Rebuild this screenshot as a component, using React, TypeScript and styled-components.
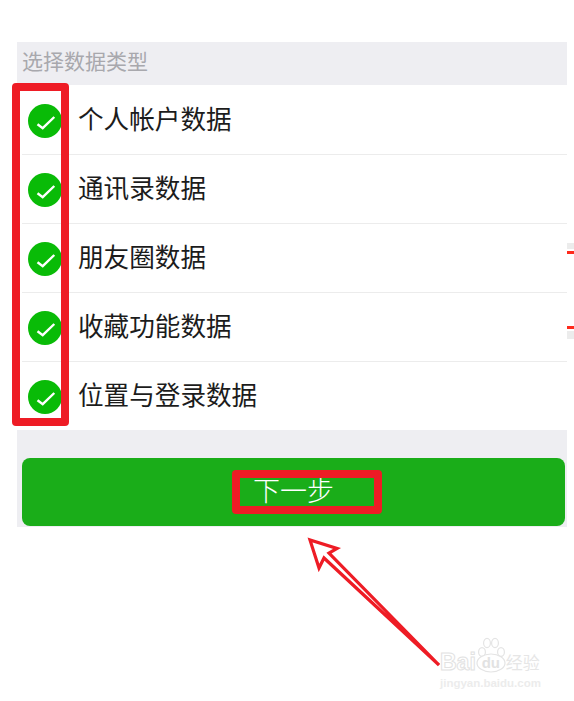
import React from 'react';
import styled, { createGlobalStyle } from 'styled-components';

const items = ['个人帐户数据', '通讯录数据', '朋友圈数据', '收藏功能数据', '位置与登录数据'];

const App: React.FC = () => {
  return (
    <>
      <GlobalStyle />
      <Page>
        <Panel>
          <SectionTitle>选择数据类型</SectionTitle>
          <List>
            {items.map((item) => (
              <Row key={item}>
                <CheckIcon />
                <RowLabel>{item}</RowLabel>
              </Row>
            ))}
          </List>
          <Footer>
            <NextButton>下一步</NextButton>
          </Footer>
        </Panel>

        <ColumnMark />
        <ButtonMark />
        <Arrow />
        <ScrapStrip>
          <Scrap $height={6} $color="#ececec" />
          <Scrap $height={3} $color="#ff2a1c" />
          <Scrap $height={68} $color="#fff" />
          <Scrap $height={3} $color="#ff2a1c" />
          <Scrap $height={8} $color="#ececec" />
        </ScrapStrip>

        <Watermark>
          <MarkName>
            <MarkLatin>Bai</MarkLatin>
            <MarkPaw>
              <PawIcon />
              <MarkDu>du</MarkDu>
            </MarkPaw>
            <MarkCn>经验</MarkCn>
          </MarkName>
          <MarkUrl>jingyan.baidu.com</MarkUrl>
        </Watermark>
      </Page>
    </>
  );
};

export default App;

const CheckIcon = () => (
  <svg width="34" height="34" viewBox="0 0 34 34">
    <circle cx="17" cy="17" r="17" fill="#09bb07" />
    <path d="M9.5 20.3L14.7 24.2L26.3 13" fill="none" stroke="#fff" strokeWidth="2.4" />
  </svg>
);

// 빨간 화살표
const Arrow = () => (
  <ArrowSvg width="574" height="701" viewBox="0 0 574 701">
    <path
      d="M439 665 L329 553 L337 548.5 L310 540 L319 568 L324 558 Z"
      fill="#fff"
      stroke="#ee1c25"
      strokeWidth="3.2"
      strokeLinejoin="miter"
    />
  </ArrowSvg>
);

const PawIcon = () => (
  <PawSvg width="32" height="36" viewBox="0 0 32 36">
    <g fill="#fff" stroke="#e4e4e4" strokeWidth="1.2">
      <ellipse cx="7" cy="15" rx="3.4" ry="4.4" />
      <ellipse cx="12" cy="6" rx="3.4" ry="4.6" />
      <ellipse cx="20" cy="6" rx="3.4" ry="4.6" />
      <ellipse cx="26" cy="15" rx="3.4" ry="4.4" />
      <ellipse cx="16" cy="26" rx="14" ry="9" />
    </g>
  </PawSvg>
);

const GlobalStyle = createGlobalStyle`
  html, body {
    margin: 0;
    background: #fff;
  }
`;

// 전체 화면
const Page = styled.div`
  position: relative;
  width: 574px;
  height: 701px;
  padding: 42px 7px 0 17px;
  box-sizing: border-box;
  overflow: hidden;
  background: #fff;
  font-family: 'Noto Sans CJK SC', 'Liberation Sans', sans-serif;
`;

const Panel = styled.div`
  width: 550px;
  background: #eeeef2;
`;

const SectionTitle = styled.div`
  height: 43px;
  padding: 0 0 8px 5px;
  box-sizing: border-box;
  display: flex;
  align-items: center;
  font-size: 21px;
  color: #a8a8ad;
`;

const List = styled.div`
  padding-top: 1px;
  background: #fff;
`;

const Row = styled.div`
  height: 68px;
  margin-left: 5px;
  padding-left: 6px;
  display: flex;
  align-items: center;
  gap: 17px;
  border-bottom: 1px solid #ececec;
  &:last-child {
    border-bottom: none;
  }
  > svg {
    flex: none;
    margin-top: 1px;
  }
`;

const RowLabel = styled.span`
  margin-left: -1px;
  padding-bottom: 6px;
  font-size: 25.6px;
  color: #1c1c1c;
`;

const Footer = styled.div`
  height: 97px;
  padding: 28px 2px 1px 5px;
  box-sizing: border-box;
`;

const NextButton = styled.div`
  height: 68px;
  padding-bottom: 6px;
  box-sizing: border-box;
  display: flex;
  align-items: center;
  justify-content: center;
  background: #1aad19;
  border-radius: 8px;
  font-size: 27px;
  font-weight: 300;
  color: #fff;
`;

// 빨간 표시 박스
const ColumnMark = styled.div`
  position: absolute;
  left: 12px;
  top: 83px;
  width: 57px;
  height: 343px;
  box-sizing: border-box;
  border: 8px solid #ee1c25;
  border-radius: 4px;
`;

const ButtonMark = styled.div`
  position: absolute;
  left: 232px;
  top: 470px;
  width: 150px;
  height: 44px;
  box-sizing: border-box;
  border: 8px solid #ee1c25;
  border-radius: 4px;
`;

const ArrowSvg = styled.svg`
  position: absolute;
  left: 0;
  top: 0;
`;

// 오른쪽 끝에 남은 조각
const ScrapStrip = styled.div`
  position: absolute;
  left: 567px;
  right: 0;
  top: 243px;
  display: flex;
  flex-direction: column;
  gap: 2px;
`;

const Scrap = styled.div<{ $height: number; $color: string }>`
  height: ${(p) => p.$height}px;
  background: ${(p) => p.$color};
`;

// 워터마크
const Watermark = styled.div`
  position: absolute;
  left: 440px;
  top: 650px;
  width: 104px;
  display: flex;
  flex-direction: column;
  gap: 3px;
`;

const MarkName = styled.div`
  display: flex;
  align-items: center;
  height: 24px;
  white-space: nowrap;
`;

const MarkLatin = styled.span`
  font-family: 'Liberation Sans', sans-serif;
  font-size: 23px;
  line-height: 24px;
  font-weight: 700;
  color: #fff;
  -webkit-text-stroke: 1px #e2e2e2;
`;

const MarkPaw = styled.div`
  position: relative;
  flex: none;
  width: 30px;
  height: 24px;
  display: flex;
  align-items: center;
  justify-content: center;
`;

const PawSvg = styled.svg`
  position: absolute;
  left: -1px;
  bottom: 1px;
`;

const MarkDu = styled.span`
  position: relative;
  font-family: 'Liberation Sans', sans-serif;
  font-size: 15px;
  font-weight: 700;
  color: #e2e2e2;
`;

const MarkCn = styled.span`
  flex: none;
  font-size: 17px;
  line-height: 24px;
  color: #e6e6e6;
`;

const MarkUrl = styled.div`
  font-family: 'Liberation Sans', sans-serif;
  font-size: 11.5px;
  line-height: 13px;
  font-weight: 700;
  white-space: nowrap;
  color: #ececec;
`;
